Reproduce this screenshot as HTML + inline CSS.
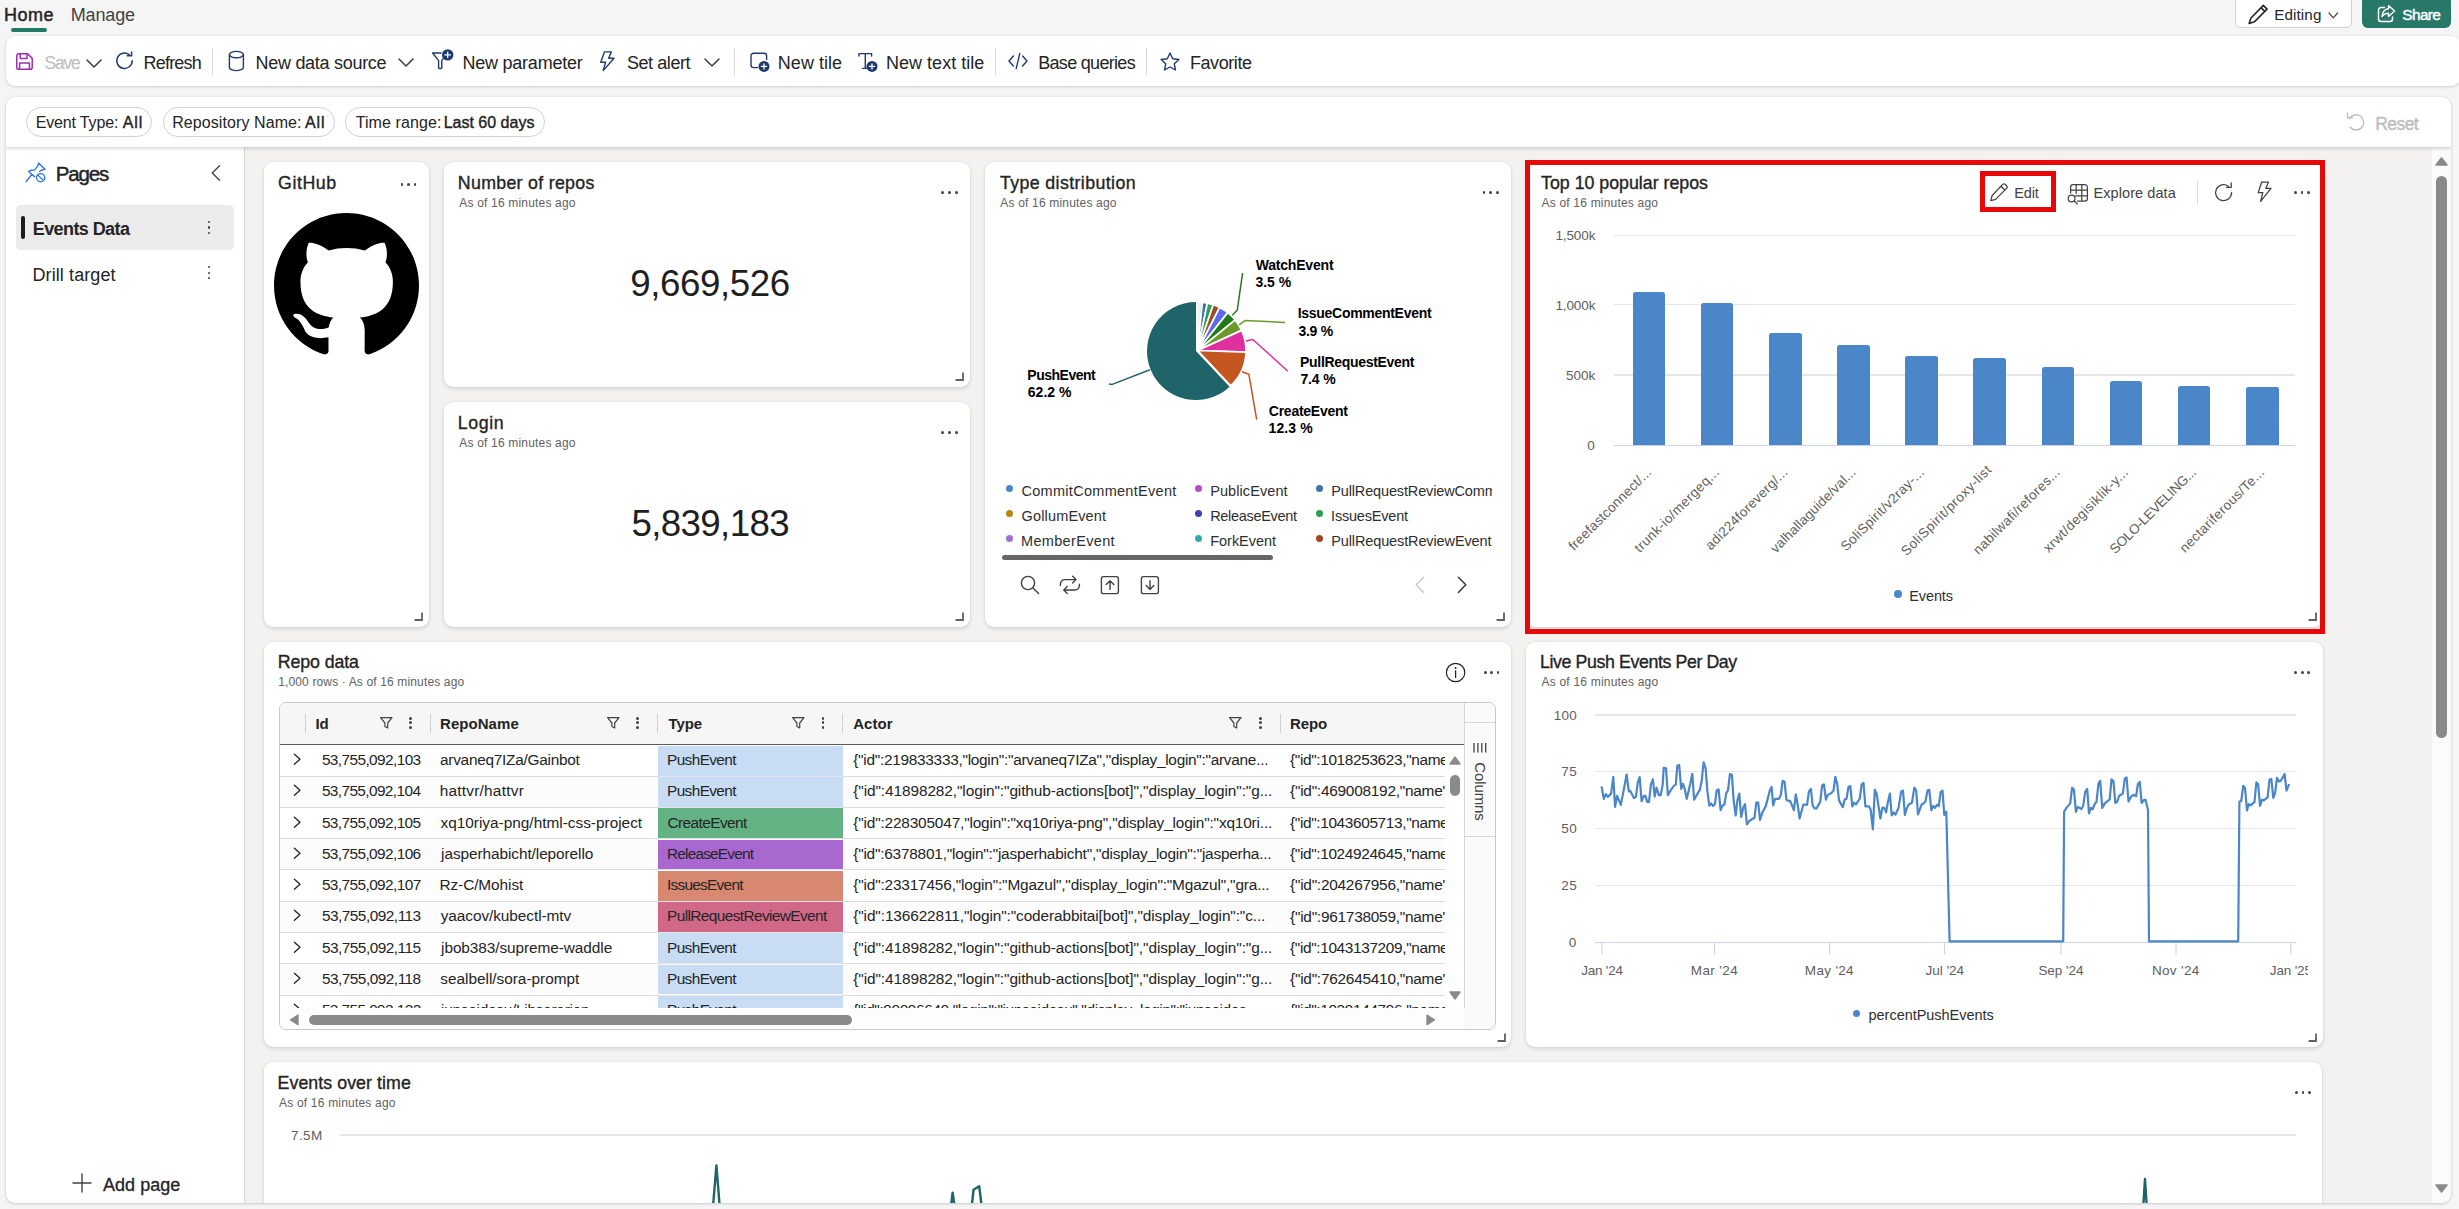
<!DOCTYPE html>
<html lang="en"><head><meta charset="utf-8"><title>Real-Time Dashboard</title>
<style>
html,body{margin:0;padding:0}
body{width:2459px;height:1209px;overflow:hidden;position:relative;background:#f5f5f5;font-family:"Liberation Sans",sans-serif;color:#242424}
span{display:block}
</style></head><body>
<span style="position:absolute;left:4.02px;top:6.00px;font-size:18px;line-height:18px;color:#242424;white-space:pre;-webkit-text-stroke:0.45px #242424;letter-spacing:0.487px;">Home</span>
<span style="position:absolute;left:70.72px;top:6.00px;font-size:18px;line-height:18px;color:#424242;white-space:pre;letter-spacing:-0.154px;">Manage</span>
<div style="position:absolute;left:11px;top:28.2px;width:36.00px;height:3.60px;background:#1f7a66;border-radius:2px;"></div>
<div style="position:absolute;left:2234.5px;top:-4px;width:117.00px;height:31.80px;background:#fff;border-radius:5px;box-sizing:border-box;border:1px solid #d1d1d1;"></div>
<svg style="position:absolute;left:2246px;top:2px;" width="24" height="24" viewBox="0 0 23 23" fill="none"><path d="M16.6 3.2 L20.2 6.8 L8 19 L3 20.6 L4.6 15.6 Z M14.6 5.6 L18 9" stroke="#242424" stroke-width="1.5" stroke-linejoin="round" stroke-linecap="round"/></svg>
<span style="position:absolute;left:2274.15px;top:7.00px;font-size:15.2px;line-height:15.2px;color:#242424;white-space:pre;letter-spacing:0.132px;">Editing</span>
<svg style="position:absolute;left:2327.4px;top:10.6px;" width="12.6" height="8.8" viewBox="0 0 12.6 8.8" fill="none"><path d="M2 2 L6.30 6.80 L10.60 2" stroke="#424242" stroke-width="1.2" stroke-linecap="round" stroke-linejoin="round"/></svg>
<div style="position:absolute;left:2362px;top:-4px;width:89.00px;height:31.80px;background:#28786a;border-radius:6px;"></div>
<svg style="position:absolute;left:2375px;top:3px;" width="22" height="22" viewBox="0 0 22 22" fill="none"><path d="M9.5 4.5 H6 a2.5 2.5 0 0 0 -2.5 2.5 v9 a2.5 2.5 0 0 0 2.5 2.5 h9 a2.5 2.5 0 0 0 2.5 -2.5 v-2" stroke="#fff" stroke-width="1.5" stroke-linecap="round"/><path d="M13.5 2.6 L19.6 8 L13.5 13.4 V10.3 C10.5 10.2 8.6 11.2 7 13.6 C7.4 9.2 9.8 6 13.5 5.7 Z" stroke="#fff" stroke-width="1.4" stroke-linejoin="round"/></svg>
<span style="position:absolute;left:2402.30px;top:7.00px;font-size:15.4px;line-height:15.4px;color:#fff;white-space:pre;-webkit-text-stroke:0.4px #fff;letter-spacing:-0.621px;">Share</span>
<div style="position:absolute;left:6px;top:36px;width:2454.00px;height:50.00px;background:#fff;border-radius:9px;box-shadow:0 1px 3px rgba(0,0,0,.14),0 0 2px rgba(0,0,0,.08);"></div>
<svg style="position:absolute;left:15px;top:52px;" width="19" height="19" viewBox="0 0 19 19" fill="none"><path d="M1.8 3.6 a1.8 1.8 0 0 1 1.8 -1.8 H12.6 L17.2 6.4 V15.4 a1.8 1.8 0 0 1 -1.8 1.8 H3.6 a1.8 1.8 0 0 1 -1.8 -1.8 Z" stroke="#9a2db0" stroke-width="1.5" stroke-linejoin="round"/><path d="M5.2 2 V6.6 H12 V2 M4.6 17 V11 H14.4 V17" stroke="#9a2db0" stroke-width="1.5" stroke-linejoin="round"/></svg>
<span style="position:absolute;left:44.18px;top:54.00px;font-size:18px;line-height:18px;color:#bdbdbd;white-space:pre;letter-spacing:-1.470px;">Save</span>
<svg style="position:absolute;left:84.5px;top:57.5px;" width="18.0" height="11.0" viewBox="0 0 18.0 11.0" fill="none"><path d="M2 2 L9.00 9.00 L16.00 2" stroke="#424242" stroke-width="1.6" stroke-linecap="round" stroke-linejoin="round"/></svg>
<svg style="position:absolute;left:114px;top:50px;" width="21" height="21" viewBox="0 0 21 21" fill="none"><path d="M18.2 10.8 A7.7 7.7 0 1 1 15.2 4.6" stroke="#1e3a6e" stroke-width="1.5" stroke-linecap="round"/><path d="M13.2 4.4 H17.6 V0.6" stroke="#1e3a6e" stroke-width="1.5" stroke-linecap="round" stroke-linejoin="round" transform="translate(0,1.4)"/></svg>
<span style="position:absolute;left:143.52px;top:54.00px;font-size:18px;line-height:18px;color:#242424;white-space:pre;letter-spacing:-0.797px;">Refresh</span>
<div style="position:absolute;left:212px;top:48px;width:1.00px;height:26.50px;background:#d6d6d6;border-radius:0px;"></div>
<svg style="position:absolute;left:227px;top:49px;" width="19" height="24" viewBox="0 0 19 24" fill="none"><ellipse cx="9.4" cy="5.6" rx="7" ry="3.2" stroke="#1e3a6e" stroke-width="1.4"/><path d="M2.4 5.6 V18.4 C2.4 20.2 5.6 21.6 9.4 21.6 C13.2 21.6 16.4 20.2 16.4 18.4 V5.6" stroke="#1e3a6e" stroke-width="1.4"/></svg>
<span style="position:absolute;left:255.52px;top:54.00px;font-size:18px;line-height:18px;color:#242424;white-space:pre;letter-spacing:-0.285px;">New data source</span>
<svg style="position:absolute;left:396.5px;top:57px;" width="18.0" height="11" viewBox="0 0 18.0 11" fill="none"><path d="M2 2 L9.00 9.00 L16.00 2" stroke="#424242" stroke-width="1.6" stroke-linecap="round" stroke-linejoin="round"/></svg>
<svg style="position:absolute;left:430px;top:47px;" width="26" height="24" viewBox="0 0 26 24" fill="none"><path d="M2.6 6 H11 M2.6 6 L8.6 13.6 V20.6 a0.9 0.9 0 0 0 0.9 0.9 h1.4 a0.9 0.9 0 0 0 0.9 -0.9 V13.6 L14 10.4" stroke="#1e3a6e" stroke-width="1.4" stroke-linejoin="round" stroke-linecap="round"/><circle cx="17.7" cy="7.9" r="5.7" fill="#1e3a6e"/><path d="M15 7.9 H20.4 M17.7 5.2 V10.6" stroke="#fff" stroke-width="1.3" stroke-linecap="round"/></svg>
<span style="position:absolute;left:462.52px;top:54.00px;font-size:18px;line-height:18px;color:#242424;white-space:pre;letter-spacing:-0.239px;">New parameter</span>
<svg style="position:absolute;left:598px;top:49px;" width="19" height="25" viewBox="0 0 19 25" fill="none"><path d="M6.4 2.9 H13.4 L10.6 9.2 H16 L5.2 21.6 L7.6 13.2 H2.8 Z" stroke="#1e3a6e" stroke-width="1.4" stroke-linejoin="round"/></svg>
<span style="position:absolute;left:626.98px;top:54.00px;font-size:18px;line-height:18px;color:#242424;white-space:pre;letter-spacing:-0.436px;">Set alert</span>
<svg style="position:absolute;left:703px;top:57px;" width="18" height="11" viewBox="0 0 18 11" fill="none"><path d="M2 2 L9.00 9.00 L16.00 2" stroke="#424242" stroke-width="1.6" stroke-linecap="round" stroke-linejoin="round"/></svg>
<div style="position:absolute;left:734px;top:48px;width:1.00px;height:26.50px;background:#d6d6d6;border-radius:0px;"></div>
<svg style="position:absolute;left:748px;top:50px;" width="24" height="24" viewBox="0 0 24 24" fill="none"><path d="M18.6 9.4 V5.8 a2.6 2.6 0 0 0 -2.6 -2.6 H5.6 a2.6 2.6 0 0 0 -2.6 2.6 V15 a2.6 2.6 0 0 0 2.6 2.6 H9.6" stroke="#1e3a6e" stroke-width="1.4" stroke-linecap="round"/><circle cx="16" cy="16.4" r="5.5" fill="#1e3a6e"/><path d="M13.4 16.4 H18.6 M16 13.8 V19" stroke="#fff" stroke-width="1.3" stroke-linecap="round"/></svg>
<span style="position:absolute;left:777.82px;top:54.00px;font-size:18px;line-height:18px;color:#242424;white-space:pre;letter-spacing:0.037px;">New tile</span>
<svg style="position:absolute;left:856px;top:50px;" width="24" height="24" viewBox="0 0 24 24" fill="none"><path d="M3 6 V3.6 H15.6 V6 M9.3 3.6 V18.4 M6.6 18.4 H10.6" stroke="#1e3a6e" stroke-width="1.4" stroke-linecap="round" stroke-linejoin="round"/><circle cx="16" cy="16.4" r="5.5" fill="#1e3a6e"/><path d="M13.4 16.4 H18.6 M16 13.8 V19" stroke="#fff" stroke-width="1.3" stroke-linecap="round"/></svg>
<span style="position:absolute;left:885.92px;top:54.00px;font-size:18px;line-height:18px;color:#242424;white-space:pre;letter-spacing:0.037px;">New text tile</span>
<div style="position:absolute;left:995px;top:48px;width:1.00px;height:26.50px;background:#d6d6d6;border-radius:0px;"></div>
<svg style="position:absolute;left:1006px;top:50px;" width="24" height="22" viewBox="0 0 24 22" fill="none"><path d="M7.4 6 L3 11 L7.4 16 M16.6 6 L21 11 L16.6 16 M13.8 3.4 L10.2 18.6" stroke="#1e3a6e" stroke-width="1.4" stroke-linecap="round" stroke-linejoin="round"/></svg>
<span style="position:absolute;left:1038.22px;top:54.00px;font-size:18px;line-height:18px;color:#242424;white-space:pre;letter-spacing:-0.694px;">Base queries</span>
<div style="position:absolute;left:1146px;top:48px;width:1.00px;height:26.50px;background:#d6d6d6;border-radius:0px;"></div>
<svg style="position:absolute;left:1158px;top:50px;" width="24" height="24" viewBox="0 0 24 24" fill="none"><path d="M12 3 L14.7 8.7 L20.9 9.5 L16.3 13.8 L17.5 20 L12 17 L6.5 20 L7.7 13.8 L3.1 9.5 L9.3 8.7 Z" stroke="#1e3a6e" stroke-width="1.4" stroke-linejoin="round"/></svg>
<span style="position:absolute;left:1189.92px;top:54.00px;font-size:18px;line-height:18px;color:#242424;white-space:pre;letter-spacing:-0.421px;">Favorite</span>
<div style="position:absolute;left:6px;top:97px;width:2445px;height:1106px;background:#f3f2f1;border-radius:9px;overflow:hidden;box-shadow:0 1px 3px rgba(0,0,0,.16),0 0 2px rgba(0,0,0,.1);">
<div style="position:absolute;left:2426px;top:50px;width:19px;height:1056px;background:#fbfbfb"></div>
<div style="position:absolute;left:2430.3px;top:79px;width:10.6px;height:562px;background:#8a8a8a;border-radius:6px"></div>
<svg style="position:absolute;left:2428px;top:58px" width="15" height="13" viewBox="0 0 15 13"><path d="M7.5 3 L13 10 H2 Z" fill="#8a8a8a" stroke="#8a8a8a" stroke-width="1.6" stroke-linejoin="round"/></svg>
<svg style="position:absolute;left:2428px;top:1085px" width="15" height="13" viewBox="0 0 15 13"><path d="M7.5 10 L13 3 H2 Z" fill="#8a8a8a" stroke="#8a8a8a" stroke-width="1.6" stroke-linejoin="round"/></svg>
<div style="position:absolute;left:0;top:50px;width:238px;height:1056px;background:#fff;border-right:1px solid #d6d6d6"></div>
<div style="position:absolute;left:0;top:0;width:2445px;height:50px;background:#fff;box-shadow:0 1px 4px rgba(0,0,0,.22)"></div>
</div>
<div style="position:absolute;left:26px;top:107.2px;width:125.80px;height:29.80px;background:#fff;border-radius:15px;box-sizing:border-box;border:1px solid #d1d1d1;"></div>
<div style="position:absolute;left:162.6px;top:107.2px;width:172.00px;height:29.80px;background:#fff;border-radius:15px;box-sizing:border-box;border:1px solid #d1d1d1;"></div>
<div style="position:absolute;left:345.4px;top:107.2px;width:199.20px;height:29.80px;background:#fff;border-radius:15px;box-sizing:border-box;border:1px solid #d1d1d1;"></div>
<span style="position:absolute;left:35.69px;top:115.00px;font-size:16px;line-height:16px;color:#242424;white-space:pre;letter-spacing:-0.152px;">Event Type:</span>
<span style="position:absolute;left:122.77px;top:115.00px;font-size:16px;line-height:16px;color:#242424;white-space:pre;-webkit-text-stroke:0.4px #242424;letter-spacing:0.860px;">All</span>
<span style="position:absolute;left:172.19px;top:115.00px;font-size:16px;line-height:16px;color:#242424;white-space:pre;letter-spacing:0.082px;">Repository Name:</span>
<span style="position:absolute;left:304.97px;top:115.00px;font-size:16px;line-height:16px;color:#242424;white-space:pre;-webkit-text-stroke:0.4px #242424;letter-spacing:0.910px;">All</span>
<span style="position:absolute;left:355.64px;top:115.00px;font-size:16px;line-height:16px;color:#242424;white-space:pre;letter-spacing:0.105px;">Time range:</span>
<span style="position:absolute;left:443.69px;top:115.00px;font-size:16px;line-height:16px;color:#242424;white-space:pre;-webkit-text-stroke:0.4px #242424;letter-spacing:-0.003px;">Last 60 days</span>
<svg style="position:absolute;left:2344px;top:111px;" width="23" height="23" viewBox="0 0 23 23" fill="none"><path d="M4 4.6 V9.4 H8.8" stroke="#bdbdbd" stroke-width="1.4" stroke-linecap="round" stroke-linejoin="round" transform="translate(-0.5,-2.6)"/><path d="M3.9 7 A7.6 7.6 0 1 1 4.6 15.6" stroke="#bdbdbd" stroke-width="1.4" stroke-linecap="round" transform="translate(1.6,0.6)"/></svg>
<span style="position:absolute;left:2375.26px;top:116.00px;font-size:17.5px;line-height:17.5px;color:#bdbdbd;white-space:pre;-webkit-text-stroke:0.4px #bdbdbd;letter-spacing:-0.563px;">Reset</span>
<svg style="position:absolute;left:24px;top:161px;" width="24" height="24" viewBox="0 0 24 24" fill="none"><path d="M15.6 10.4 L17.5 8.9 L18.8 9.1 L21.1 8.2 L14.5 2.1 L13.8 4.9 L10.5 9.2 L7.5 9.1 L4.6 10.4 L10.7 15.7 M7.8 13.4 L2.2 20.5" stroke="#2a6fdb" stroke-width="1.3" stroke-linecap="round" stroke-linejoin="round"/><circle cx="16.6" cy="16.7" r="4.1" stroke="#2a6fdb" stroke-width="1.3"/><path d="M13.9 14.1 L19.3 19.2" stroke="#2a6fdb" stroke-width="1.3"/></svg>
<span style="position:absolute;left:55.72px;top:164.00px;font-size:20.5px;line-height:20.5px;color:#242424;white-space:pre;-webkit-text-stroke:0.45px #242424;letter-spacing:-1.176px;">Pages</span>
<svg style="position:absolute;left:208px;top:163px;" width="16" height="20" viewBox="0 0 16 20" fill="none"><path d="M11.6 2.8 L4.2 10 L11.6 17.2" stroke="#424242" stroke-width="1.3" stroke-linecap="round" stroke-linejoin="round"/></svg>
<div style="position:absolute;left:15.7px;top:205px;width:218.30px;height:44.60px;background:#ebebeb;border-radius:5px;"></div>
<div style="position:absolute;left:20.7px;top:216.2px;width:4.10px;height:22.40px;background:#1b1b1b;border-radius:2px;"></div>
<span style="position:absolute;left:32.80px;top:220.00px;font-size:18px;line-height:18px;color:#242424;white-space:pre;font-weight:700;letter-spacing:-0.595px;">Events Data</span>
<span style="position:absolute;left:32.52px;top:266.00px;font-size:18px;line-height:18px;color:#242424;white-space:pre;letter-spacing:0.090px;">Drill target</span>
<div style="position:absolute;left:208.3px;top:221.04999999999998px;width:2.10px;height:2.10px;background:#424242;border-radius:2px;"></div>
<div style="position:absolute;left:208.3px;top:226.45px;width:2.10px;height:2.10px;background:#424242;border-radius:2px;"></div>
<div style="position:absolute;left:208.3px;top:231.85px;width:2.10px;height:2.10px;background:#424242;border-radius:2px;"></div>
<div style="position:absolute;left:208.3px;top:266.35px;width:2.10px;height:2.10px;background:#424242;border-radius:2px;"></div>
<div style="position:absolute;left:208.3px;top:271.75px;width:2.10px;height:2.10px;background:#424242;border-radius:2px;"></div>
<div style="position:absolute;left:208.3px;top:277.15px;width:2.10px;height:2.10px;background:#424242;border-radius:2px;"></div>
<svg style="position:absolute;left:71px;top:1172px;" width="22" height="22" viewBox="0 0 22 22" fill="none"><path d="M11 2 V20 M2 11 H20" stroke="#424242" stroke-width="1.4" stroke-linecap="round"/></svg>
<span style="position:absolute;left:102.96px;top:1176.00px;font-size:18px;line-height:18px;color:#242424;white-space:pre;-webkit-text-stroke:0.3px #242424;letter-spacing:0.038px;">Add page</span>
<div style="position:absolute;left:264px;top:162px;width:165.00px;height:464.50px;background:#fff;border-radius:9px;box-shadow:0 2px 4px rgba(0,0,0,.11),0 0 2px rgba(0,0,0,.10);"></div>
<span style="position:absolute;left:278.10px;top:175.00px;font-size:17.8px;line-height:17.8px;color:#242424;white-space:pre;-webkit-text-stroke:0.35px #242424;letter-spacing:0.520px;">GitHub</span>
<div style="position:absolute;left:400.5px;top:182.85000000000002px;width:2.90px;height:2.90px;background:#424242;border-radius:2px;"></div>
<div style="position:absolute;left:407.05px;top:182.85000000000002px;width:2.90px;height:2.90px;background:#424242;border-radius:2px;"></div>
<div style="position:absolute;left:413.6px;top:182.85000000000002px;width:2.90px;height:2.90px;background:#424242;border-radius:2px;"></div>
<svg style="position:absolute;left:274px;top:213px;" width="145" height="145" viewBox="0 0 16 16" fill="none"><path d="M8 0C3.58 0 0 3.58 0 8c0 3.54 2.29 6.53 5.47 7.59.4.07.55-.17.55-.38 0-.19-.01-.82-.01-1.49-2.01.37-2.53-.49-2.69-.94-.09-.23-.48-.94-.82-1.13-.28-.15-.68-.52-.01-.53.63-.01 1.08.58 1.23.82.72 1.21 1.87.87 2.33.66.07-.52.28-.87.51-1.07-1.78-.2-3.64-.89-3.64-3.95 0-.87.31-1.59.82-2.15-.08-.2-.36-1.02.08-2.12 0 0 .67-.21 2.2.82.64-.18 1.32-.27 2-.27.68 0 1.36.09 2 .27 1.53-1.04 2.2-.82 2.2-.82.44 1.1.16 1.92.08 2.12.51.56.82 1.27.82 2.15 0 3.07-1.87 3.75-3.65 3.95.29.25.54.73.54 1.48 0 1.07-.01 1.93-.01 2.2 0 .21.15.46.55.38A8.013 8.013 0 0016 8c0-4.42-3.58-8-8-8z" fill="#000"/></svg>
<svg style="position:absolute;left:414px;top:611.6px;" width="9" height="9" viewBox="0 0 9 9" fill="none"><path d="M8 0.6 V8 H0.6" stroke="#616161" stroke-width="1.8"/></svg>
<div style="position:absolute;left:444px;top:162px;width:526.00px;height:224.50px;background:#fff;border-radius:9px;box-shadow:0 2px 4px rgba(0,0,0,.11),0 0 2px rgba(0,0,0,.10);"></div>
<span style="position:absolute;left:457.84px;top:175.00px;font-size:17.8px;line-height:17.8px;color:#242424;white-space:pre;-webkit-text-stroke:0.35px #242424;letter-spacing:0.291px;">Number of repos</span>
<span style="position:absolute;left:459.28px;top:197.00px;font-size:12px;line-height:12px;color:#616161;white-space:pre;letter-spacing:0.184px;">As of 16 minutes ago</span>
<div style="position:absolute;left:941.3px;top:191.05px;width:2.90px;height:2.90px;background:#424242;border-radius:2px;"></div>
<div style="position:absolute;left:948.0px;top:191.05px;width:2.90px;height:2.90px;background:#424242;border-radius:2px;"></div>
<div style="position:absolute;left:954.7px;top:191.05px;width:2.90px;height:2.90px;background:#424242;border-radius:2px;"></div>
<span style="position:absolute;left:630.28px;top:266.00px;font-size:36.7px;line-height:36.7px;color:#1f1f1f;white-space:pre;letter-spacing:-0.422px;">9,669,526</span>
<svg style="position:absolute;left:955px;top:372.1px;" width="9" height="9" viewBox="0 0 9 9" fill="none"><path d="M8 0.6 V8 H0.6" stroke="#616161" stroke-width="1.8"/></svg>
<div style="position:absolute;left:444px;top:402px;width:526.00px;height:224.50px;background:#fff;border-radius:9px;box-shadow:0 2px 4px rgba(0,0,0,.11),0 0 2px rgba(0,0,0,.10);"></div>
<span style="position:absolute;left:457.84px;top:415.00px;font-size:17.8px;line-height:17.8px;color:#242424;white-space:pre;-webkit-text-stroke:0.35px #242424;letter-spacing:0.577px;">Login</span>
<span style="position:absolute;left:459.28px;top:437.00px;font-size:12px;line-height:12px;color:#616161;white-space:pre;letter-spacing:0.184px;">As of 16 minutes ago</span>
<div style="position:absolute;left:941.3px;top:431.05px;width:2.90px;height:2.90px;background:#424242;border-radius:2px;"></div>
<div style="position:absolute;left:948.0px;top:431.05px;width:2.90px;height:2.90px;background:#424242;border-radius:2px;"></div>
<div style="position:absolute;left:954.7px;top:431.05px;width:2.90px;height:2.90px;background:#424242;border-radius:2px;"></div>
<span style="position:absolute;left:631.53px;top:506.00px;font-size:36.7px;line-height:36.7px;color:#1f1f1f;white-space:pre;letter-spacing:-0.641px;">5,839,183</span>
<svg style="position:absolute;left:955px;top:611.6px;" width="9" height="9" viewBox="0 0 9 9" fill="none"><path d="M8 0.6 V8 H0.6" stroke="#616161" stroke-width="1.8"/></svg>
<div style="position:absolute;left:985px;top:162px;width:526.00px;height:464.50px;background:#fff;border-radius:9px;box-shadow:0 2px 4px rgba(0,0,0,.11),0 0 2px rgba(0,0,0,.10);"></div>
<span style="position:absolute;left:999.90px;top:175.00px;font-size:17.8px;line-height:17.8px;color:#242424;white-space:pre;-webkit-text-stroke:0.35px #242424;letter-spacing:0.386px;">Type distribution</span>
<span style="position:absolute;left:1000.28px;top:197.00px;font-size:12px;line-height:12px;color:#616161;white-space:pre;letter-spacing:0.184px;">As of 16 minutes ago</span>
<div style="position:absolute;left:1482.6px;top:190.85000000000002px;width:2.90px;height:2.90px;background:#424242;border-radius:2px;"></div>
<div style="position:absolute;left:1489.25px;top:190.85000000000002px;width:2.90px;height:2.90px;background:#424242;border-radius:2px;"></div>
<div style="position:absolute;left:1495.8999999999999px;top:190.85000000000002px;width:2.90px;height:2.90px;background:#424242;border-radius:2px;"></div>
<svg style="position:absolute;left:1496px;top:611.6px;" width="9" height="9" viewBox="0 0 9 9" fill="none"><path d="M8 0.6 V8 H0.6" stroke="#616161" stroke-width="1.8"/></svg>
<svg style="position:absolute;left:1000px;top:240px;" width="480" height="220" viewBox="0 0 480 220" fill="none"><path d="M196.00 111.10 L229.67 146.70 A49.0 49.0 0 1 1 196.00 62.10 Z" fill="#1e6468"/><path d="M197.70 110.50 L197.70 63.00 A47.50 47.50 0 0 1 198.69 63.01 Z" fill="#4a86c8" fill-opacity="0.6" stroke="#fff" stroke-width="0.7" stroke-linejoin="round"/><path d="M197.70 110.50 L198.69 63.01 A47.50 47.50 0 0 1 199.61 63.04 Z" fill="#b8860b" fill-opacity="0.6" stroke="#fff" stroke-width="0.7" stroke-linejoin="round"/><path d="M197.70 110.50 L199.61 63.04 A47.50 47.50 0 0 1 200.60 63.09 Z" fill="#a070c8" fill-opacity="0.6" stroke="#fff" stroke-width="0.7" stroke-linejoin="round"/><path d="M197.70 110.50 L200.60 63.09 A47.50 47.50 0 0 1 202.25 63.22 Z" fill="#38a8b0" fill-opacity="0.6" stroke="#fff" stroke-width="0.7" stroke-linejoin="round"/><path d="M197.70 110.50 L202.33 62.37 A48.35 48.35 0 0 1 207.34 63.12 Z" fill="#3f72a8" stroke="#fff" stroke-width="1.7" stroke-linejoin="round"/><path d="M197.70 110.50 L207.34 63.12 A48.35 48.35 0 0 1 213.28 64.73 Z" fill="#2e9e5a" stroke="#fff" stroke-width="1.7" stroke-linejoin="round"/><path d="M197.70 110.50 L213.28 64.73 A48.35 48.35 0 0 1 219.65 67.42 Z" fill="#9c4a20" stroke="#fff" stroke-width="1.7" stroke-linejoin="round"/><path d="M197.70 110.50 L219.65 67.42 A48.35 48.35 0 0 1 227.73 72.61 Z" fill="#5b6bf0" stroke="#fff" stroke-width="1.7" stroke-linejoin="round"/><path d="M197.70 110.50 L227.73 72.61 A48.35 48.35 0 0 1 235.17 79.94 Z" fill="#1f7a1a" stroke="#fff" stroke-width="1.7" stroke-linejoin="round"/><path d="M197.70 110.50 L235.17 79.94 A48.35 48.35 0 0 1 241.66 90.37 Z" fill="#6a9a2a" stroke="#fff" stroke-width="1.7" stroke-linejoin="round"/><path d="M197.70 110.50 L241.66 90.37 A48.35 48.35 0 0 1 246.02 112.19 Z" fill="#e030a0" stroke="#fff" stroke-width="1.7" stroke-linejoin="round"/><path d="M197.70 110.50 L246.02 112.19 A48.35 48.35 0 0 1 230.67 145.86 Z" fill="#c4561f" stroke="#fff" stroke-width="1.7" stroke-linejoin="round"/><path d="M232.3 75.2 L237.2 70.3 L242.6 33.2" stroke="#2a7a1a" stroke-width="1.5" fill="none" stroke-linejoin="round"/><path d="M239.1 84.9 L245.0 80.6 L285.0 82.4" stroke="#6a9a2a" stroke-width="1.5" fill="none" stroke-linejoin="round"/><path d="M246.0 101.1 L252.8 99.5 L287.9 131.2" stroke="#e030a0" stroke-width="1.5" fill="none" stroke-linejoin="round"/><path d="M242.0 131.8 L248.9 134.3 L256.7 179.6" stroke="#c4561f" stroke-width="1.5" fill="none" stroke-linejoin="round"/><path d="M149.9 129.8 L112.2 144.4 L108.9 144.0" stroke="#1e6468" stroke-width="1.5" fill="none" stroke-linejoin="round"/></svg>
<span style="position:absolute;left:1255.69px;top:258.00px;font-size:14px;line-height:14px;color:#000;white-space:pre;font-weight:700;letter-spacing:-0.191px;">WatchEvent</span>
<span style="position:absolute;left:1255.38px;top:275.00px;font-size:14px;line-height:14px;color:#000;white-space:pre;font-weight:700;letter-spacing:-0.002px;">3.5 %</span>
<span style="position:absolute;left:1297.76px;top:306.00px;font-size:14px;line-height:14px;color:#000;white-space:pre;font-weight:700;letter-spacing:-0.292px;">IssueCommentEvent</span>
<span style="position:absolute;left:1298.38px;top:324.00px;font-size:14px;line-height:14px;color:#000;white-space:pre;font-weight:700;letter-spacing:-0.252px;">3.9 %</span>
<span style="position:absolute;left:1300.06px;top:355.00px;font-size:14px;line-height:14px;color:#000;white-space:pre;font-weight:700;letter-spacing:-0.315px;">PullRequestEvent</span>
<span style="position:absolute;left:1300.40px;top:372.00px;font-size:14px;line-height:14px;color:#000;white-space:pre;font-weight:700;letter-spacing:-0.107px;">7.4 %</span>
<span style="position:absolute;left:1268.83px;top:404.00px;font-size:14px;line-height:14px;color:#000;white-space:pre;font-weight:700;letter-spacing:-0.256px;">CreateEvent</span>
<span style="position:absolute;left:1268.52px;top:421.00px;font-size:14px;line-height:14px;color:#000;white-space:pre;font-weight:700;letter-spacing:0.113px;">12.3 %</span>
<span style="position:absolute;left:1027.36px;top:368.00px;font-size:14px;line-height:14px;color:#000;white-space:pre;font-weight:700;letter-spacing:-0.493px;">PushEvent</span>
<span style="position:absolute;left:1027.79px;top:385.00px;font-size:14px;line-height:14px;color:#000;white-space:pre;font-weight:700;letter-spacing:0.039px;">62.2 %</span>
<div style="position:absolute;left:1005.5px;top:484.7px;width:7.40px;height:7.40px;background:#4a86c8;border-radius:4px;"></div>
<span style="position:absolute;left:1021.46px;top:484.00px;font-size:14.5px;line-height:14.5px;color:#2e2e2e;white-space:pre;letter-spacing:0.292px;">CommitCommentEvent</span>
<div style="position:absolute;left:1005.5px;top:509.90000000000003px;width:7.40px;height:7.40px;background:#b8860b;border-radius:4px;"></div>
<span style="position:absolute;left:1021.47px;top:509.00px;font-size:14.5px;line-height:14.5px;color:#2e2e2e;white-space:pre;letter-spacing:0.163px;">GollumEvent</span>
<div style="position:absolute;left:1005.5px;top:535.0px;width:7.40px;height:7.40px;background:#a070c8;border-radius:4px;"></div>
<span style="position:absolute;left:1021.01px;top:534.00px;font-size:14.5px;line-height:14.5px;color:#2e2e2e;white-space:pre;letter-spacing:0.334px;">MemberEvent</span>
<div style="position:absolute;left:1194.8px;top:484.7px;width:7.40px;height:7.40px;background:#b84cc8;border-radius:4px;"></div>
<span style="position:absolute;left:1210.21px;top:484.00px;font-size:14.5px;line-height:14.5px;color:#2e2e2e;white-space:pre;letter-spacing:0.082px;">PublicEvent</span>
<div style="position:absolute;left:1194.8px;top:509.90000000000003px;width:7.40px;height:7.40px;background:#4040b0;border-radius:4px;"></div>
<span style="position:absolute;left:1210.21px;top:509.00px;font-size:14.5px;line-height:14.5px;color:#2e2e2e;white-space:pre;letter-spacing:-0.307px;">ReleaseEvent</span>
<div style="position:absolute;left:1194.8px;top:535.0px;width:7.40px;height:7.40px;background:#38a8b0;border-radius:4px;"></div>
<span style="position:absolute;left:1210.21px;top:534.00px;font-size:14.5px;line-height:14.5px;color:#2e2e2e;white-space:pre;letter-spacing:-0.023px;">ForkEvent</span>
<div style="position:absolute;left:1316.0px;top:484.7px;width:7.40px;height:7.40px;background:#3f72a8;border-radius:4px;"></div>
<div style="position:absolute;left:1328.4px;top:479.7px;width:163.2px;height:24px;overflow:hidden">
<span style="position:absolute;left:2.81px;top:4.00px;font-size:14.5px;line-height:14.5px;color:#2e2e2e;white-space:pre;letter-spacing:-0.141px;">PullRequestReviewCommentEvent</span>
</div>
<div style="position:absolute;left:1316.0px;top:509.90000000000003px;width:7.40px;height:7.40px;background:#2e9e50;border-radius:4px;"></div>
<span style="position:absolute;left:1331.06px;top:509.00px;font-size:14.5px;line-height:14.5px;color:#2e2e2e;white-space:pre;letter-spacing:-0.194px;">IssuesEvent</span>
<div style="position:absolute;left:1316.0px;top:535.0px;width:7.40px;height:7.40px;background:#a0481e;border-radius:4px;"></div>
<span style="position:absolute;left:1331.21px;top:534.00px;font-size:14.5px;line-height:14.5px;color:#2e2e2e;white-space:pre;letter-spacing:-0.120px;">PullRequestReviewEvent</span>
<div style="position:absolute;left:1002.3px;top:554.6px;width:270.40px;height:5.60px;background:#666;border-radius:3px;"></div>
<svg style="position:absolute;left:1018px;top:573px;" width="24" height="24" viewBox="0 0 24 24" fill="none"><circle cx="10" cy="10" r="6.6" stroke="#424242" stroke-width="1.4"/><path d="M15 15 L20.6 20.6" stroke="#424242" stroke-width="1.4" stroke-linecap="round"/></svg>
<svg style="position:absolute;left:1057px;top:573px;" width="26" height="24" viewBox="0 0 26 24" fill="none"><path d="M3.4 12.4 V11 a4.4 4.4 0 0 1 4.4 -4.4 H18.6 M15.6 3.2 L19 6.6 L15.6 10 M22.4 11.2 V12.6 a4.4 4.4 0 0 1 -4.4 4.4 H7.2 M10.2 13.6 L6.8 17 L10.2 20.4" stroke="#424242" stroke-width="1.4" stroke-linecap="round" stroke-linejoin="round"/></svg>
<svg style="position:absolute;left:1098px;top:573px;" width="24" height="24" viewBox="0 0 24 24" fill="none"><rect x="3.4" y="3.6" width="17" height="17" rx="2.2" stroke="#424242" stroke-width="1.4"/><path d="M12 16.6 V8 M8.2 11.6 L12 7.8 L15.8 11.6" stroke="#424242" stroke-width="1.4" stroke-linecap="round" stroke-linejoin="round"/></svg>
<svg style="position:absolute;left:1138px;top:573px;" width="24" height="24" viewBox="0 0 24 24" fill="none"><rect x="3.4" y="3.6" width="17" height="17" rx="2.2" stroke="#424242" stroke-width="1.4"/><path d="M12 7.6 V16.2 M8.2 12.6 L12 16.4 L15.8 12.6" stroke="#424242" stroke-width="1.4" stroke-linecap="round" stroke-linejoin="round"/></svg>
<svg style="position:absolute;left:1412px;top:574px;" width="16" height="22" viewBox="0 0 16 22" fill="none"><path d="M11.6 3.2 L4.2 10.8 L11.6 18.4" stroke="#c8c8c8" stroke-width="1.4" stroke-linecap="round" stroke-linejoin="round"/></svg>
<svg style="position:absolute;left:1454px;top:574px;" width="16" height="22" viewBox="0 0 16 22" fill="none"><path d="M4.4 3.2 L11.8 10.8 L4.4 18.4" stroke="#333" stroke-width="1.4" stroke-linecap="round" stroke-linejoin="round"/></svg>
<div style="position:absolute;left:1526px;top:162px;width:796.50px;height:464.50px;background:#fff;border-radius:9px;box-shadow:0 2px 4px rgba(0,0,0,.11),0 0 2px rgba(0,0,0,.10);"></div>
<div style="position:absolute;left:1525px;top:160px;width:800.00px;height:474.00px;background:transparent;border-radius:0px;box-sizing:border-box;border:5px solid #e80808;"></div>
<span style="position:absolute;left:1541.10px;top:175.00px;font-size:17.8px;line-height:17.8px;color:#242424;white-space:pre;-webkit-text-stroke:0.35px #242424;letter-spacing:-0.012px;">Top 10 popular repos</span>
<span style="position:absolute;left:1541.48px;top:197.00px;font-size:12px;line-height:12px;color:#616161;white-space:pre;letter-spacing:0.200px;">As of 16 minutes ago</span>
<div style="position:absolute;left:1980px;top:171px;width:76.00px;height:40.80px;background:transparent;border-radius:0px;box-sizing:border-box;border:5px solid #e80808;"></div>
<svg style="position:absolute;left:1988px;top:181px;" width="22" height="22" viewBox="0 0 22 22" fill="none"><path d="M14.6 3.4 a1.9 1.9 0 0 1 2.7 0 l1.3 1.3 a1.9 1.9 0 0 1 0 2.7 L7.6 18.4 L2.8 19.6 L4 14.8 Z M13 5.2 L16.8 9" stroke="#424242" stroke-width="1.3" stroke-linejoin="round" stroke-linecap="round"/></svg>
<span style="position:absolute;left:2014.21px;top:186.00px;font-size:14.5px;line-height:14.5px;color:#424242;white-space:pre;letter-spacing:-0.097px;">Edit</span>
<svg style="position:absolute;left:2065px;top:181px;" width="26" height="26" viewBox="0 0 26 26" fill="none"><path d="M9 3.6 H19.8 a2.6 2.6 0 0 1 2.6 2.6 V17.6 a2.6 2.6 0 0 1 -2.6 2.6 H12.4 M5.6 12 V6.2 a2.6 2.6 0 0 1 2.6 -2.6 H9 M5.6 9.2 H22.4 M10.4 14.8 H22.4 M11.2 3.6 V12.4 M16.8 3.6 V20.2" stroke="#424242" stroke-width="1.25" stroke-linecap="round"/><circle cx="6.6" cy="17.4" r="3.4" stroke="#424242" stroke-width="1.25"/><path d="M9.1 19.9 L12.2 23" stroke="#424242" stroke-width="1.25" stroke-linecap="round"/></svg>
<span style="position:absolute;left:2093.51px;top:186.00px;font-size:14.5px;line-height:14.5px;color:#424242;white-space:pre;letter-spacing:0.071px;">Explore data</span>
<div style="position:absolute;left:2197.3px;top:180.5px;width:1.00px;height:24.20px;background:#dcdcdc;border-radius:0px;"></div>
<svg style="position:absolute;left:2212px;top:181px;" width="24" height="24" viewBox="0 0 24 24" fill="none"><path d="M19.6 11.6 A8 8 0 1 1 16.4 5.2" stroke="#424242" stroke-width="1.3" stroke-linecap="round"/><path d="M14.6 5.6 H19.2 V1.2" stroke="#424242" stroke-width="1.3" stroke-linecap="round" stroke-linejoin="round" transform="translate(0,0.8)"/></svg>
<svg style="position:absolute;left:2255px;top:179px;" width="20" height="26" viewBox="0 0 20 26" fill="none"><path d="M6.6 3.2 H13.4 L10.8 9.4 H16 L5.6 22.4 L7.8 13.6 H3.2 Z" stroke="#424242" stroke-width="1.3" stroke-linejoin="round"/></svg>
<div style="position:absolute;left:2294.2px;top:190.85000000000002px;width:2.90px;height:2.90px;background:#424242;border-radius:2px;"></div>
<div style="position:absolute;left:2300.55px;top:190.85000000000002px;width:2.90px;height:2.90px;background:#424242;border-radius:2px;"></div>
<div style="position:absolute;left:2306.9px;top:190.85000000000002px;width:2.90px;height:2.90px;background:#424242;border-radius:2px;"></div>
<svg style="position:absolute;left:2308px;top:612.1px;" width="9" height="9" viewBox="0 0 9 9" fill="none"><path d="M8 0.6 V8 H0.6" stroke="#616161" stroke-width="1.8"/></svg>
<div style="position:absolute;left:1614px;top:234.5px;width:681.40px;height:1.20px;background:#e6e6e6;border-radius:0px;"></div>
<span style="position:absolute;left:1555.47px;top:229.00px;font-size:13.5px;line-height:13.5px;color:#605e5c;white-space:pre;letter-spacing:-0.125px;">1,500k</span>
<div style="position:absolute;left:1614px;top:304.29999999999995px;width:681.40px;height:1.20px;background:#e6e6e6;border-radius:0px;"></div>
<span style="position:absolute;left:1555.47px;top:299.00px;font-size:13.5px;line-height:13.5px;color:#605e5c;white-space:pre;letter-spacing:-0.125px;">1,000k</span>
<div style="position:absolute;left:1614px;top:374.4px;width:681.40px;height:1.20px;background:#e6e6e6;border-radius:0px;"></div>
<span style="position:absolute;left:1566.06px;top:369.00px;font-size:13.5px;line-height:13.5px;color:#605e5c;white-space:pre;letter-spacing:0.016px;">500k</span>
<div style="position:absolute;left:1614px;top:444.5px;width:681.40px;height:1.20px;background:#ccd6eb;border-radius:0px;"></div>
<span style="position:absolute;left:1587.17px;top:439.00px;font-size:13.5px;line-height:13.5px;color:#605e5c;white-space:pre;">0</span>
<div style="position:absolute;left:1632.67px;top:291.9px;width:32.60px;height:152.70px;background:#4a86c8;border-radius:0px;border-radius:2.5px 2.5px 0 0;"></div>
<div style="position:absolute;left:1700.8100000000002px;top:303.2px;width:32.60px;height:141.40px;background:#4a86c8;border-radius:0px;border-radius:2.5px 2.5px 0 0;"></div>
<div style="position:absolute;left:1768.95px;top:333.2px;width:32.60px;height:111.40px;background:#4a86c8;border-radius:0px;border-radius:2.5px 2.5px 0 0;"></div>
<div style="position:absolute;left:1837.0900000000001px;top:344.6px;width:32.60px;height:100.00px;background:#4a86c8;border-radius:0px;border-radius:2.5px 2.5px 0 0;"></div>
<div style="position:absolute;left:1905.2300000000002px;top:355.9px;width:32.60px;height:88.70px;background:#4a86c8;border-radius:0px;border-radius:2.5px 2.5px 0 0;"></div>
<div style="position:absolute;left:1973.3700000000001px;top:358.3px;width:32.60px;height:86.30px;background:#4a86c8;border-radius:0px;border-radius:2.5px 2.5px 0 0;"></div>
<div style="position:absolute;left:2041.51px;top:367.3px;width:32.60px;height:77.30px;background:#4a86c8;border-radius:0px;border-radius:2.5px 2.5px 0 0;"></div>
<div style="position:absolute;left:2109.65px;top:381px;width:32.60px;height:63.60px;background:#4a86c8;border-radius:0px;border-radius:2.5px 2.5px 0 0;"></div>
<div style="position:absolute;left:2177.79px;top:385.9px;width:32.60px;height:58.70px;background:#4a86c8;border-radius:0px;border-radius:2.5px 2.5px 0 0;"></div>
<div style="position:absolute;left:2245.93px;top:387.1px;width:32.60px;height:57.50px;background:#4a86c8;border-radius:0px;border-radius:2.5px 2.5px 0 0;"></div>
<span style="position:absolute;left:1541.88px;top:463.00px;font-size:13.5px;line-height:13.5px;color:#605e5c;white-space:pre;letter-spacing:0.173px;transform:rotate(-45deg);transform-origin:109.19px 11.00px;">freefastconnect/...</span>
<span style="position:absolute;left:1607.21px;top:463.00px;font-size:13.5px;line-height:13.5px;color:#605e5c;white-space:pre;letter-spacing:0.438px;transform:rotate(-45deg);transform-origin:112.00px 11.00px;">trunk-io/mergeq...</span>
<span style="position:absolute;left:1678.88px;top:463.00px;font-size:13.5px;line-height:13.5px;color:#605e5c;white-space:pre;letter-spacing:0.273px;transform:rotate(-45deg);transform-origin:108.47px 11.00px;">adi224foreverg/...</span>
<span style="position:absolute;left:1742.84px;top:463.00px;font-size:13.5px;line-height:13.5px;color:#605e5c;white-space:pre;letter-spacing:0.148px;transform:rotate(-45deg);transform-origin:112.65px 11.00px;">valhallaguide/val...</span>
<span style="position:absolute;left:1813.62px;top:463.00px;font-size:13.5px;line-height:13.5px;color:#605e5c;white-space:pre;letter-spacing:0.288px;transform:rotate(-45deg);transform-origin:110.01px 11.00px;">SoliSpirit/v2ray-...</span>
<span style="position:absolute;left:1870.76px;top:460.00px;font-size:13.5px;line-height:13.5px;color:#605e5c;white-space:pre;letter-spacing:0.504px;transform:rotate(-45deg);transform-origin:121.01px 11.00px;">SoliSpirit/proxy-list</span>
<span style="position:absolute;left:1945.11px;top:463.00px;font-size:13.5px;line-height:13.5px;color:#605e5c;white-space:pre;letter-spacing:0.341px;transform:rotate(-45deg);transform-origin:114.80px 11.00px;">nabilwafi/refores...</span>
<span style="position:absolute;left:2016.00px;top:463.00px;font-size:13.5px;line-height:13.5px;color:#605e5c;white-space:pre;letter-spacing:0.448px;transform:rotate(-45deg);transform-origin:112.05px 11.00px;">xrwt/degisiklik-y...</span>
<span style="position:absolute;left:2082.28px;top:463.00px;font-size:13.5px;line-height:13.5px;color:#605e5c;white-space:pre;letter-spacing:-0.276px;transform:rotate(-45deg);transform-origin:113.91px 11.00px;">SOLO-LEVELING...</span>
<span style="position:absolute;left:2152.03px;top:463.00px;font-size:13.5px;line-height:13.5px;color:#605e5c;white-space:pre;letter-spacing:0.346px;transform:rotate(-45deg);transform-origin:112.30px 11.00px;">nectariferous/Te...</span>
<div style="position:absolute;left:1894.0px;top:590.1px;width:7.60px;height:7.60px;background:#4a86c8;border-radius:4px;"></div>
<span style="position:absolute;left:1909.21px;top:589.00px;font-size:14.5px;line-height:14.5px;color:#2e2e2e;white-space:pre;letter-spacing:-0.103px;">Events</span>
<div style="position:absolute;left:264px;top:642px;width:1247.00px;height:404.50px;background:#fff;border-radius:9px;box-shadow:0 2px 4px rgba(0,0,0,.11),0 0 2px rgba(0,0,0,.10);"></div>
<span style="position:absolute;left:277.64px;top:654.00px;font-size:17.8px;line-height:17.8px;color:#242424;white-space:pre;-webkit-text-stroke:0.35px #242424;letter-spacing:-0.087px;">Repo data</span>
<span style="position:absolute;left:278.19px;top:676.00px;font-size:12px;line-height:12px;color:#616161;white-space:pre;letter-spacing:0.141px;">1,000 rows · As of 16 minutes ago</span>
<svg style="position:absolute;left:1444px;top:661px;" width="23" height="23" viewBox="0 0 23 23" fill="none"><circle cx="11.6" cy="11.5" r="9.2" stroke="#242424" stroke-width="1.2"/><path d="M11.6 10 V16.4" stroke="#242424" stroke-width="1.3" stroke-linecap="round"/><circle cx="11.6" cy="7" r="0.95" fill="#242424"/></svg>
<div style="position:absolute;left:1483.9px;top:671.25px;width:2.90px;height:2.90px;background:#424242;border-radius:2px;"></div>
<div style="position:absolute;left:1490.2px;top:671.25px;width:2.90px;height:2.90px;background:#424242;border-radius:2px;"></div>
<div style="position:absolute;left:1496.5px;top:671.25px;width:2.90px;height:2.90px;background:#424242;border-radius:2px;"></div>
<svg style="position:absolute;left:1496.5px;top:1032.6px;" width="9" height="9" viewBox="0 0 9 9" fill="none"><path d="M8 0.6 V8 H0.6" stroke="#616161" stroke-width="1.8"/></svg>
<div style="position:absolute;left:279px;top:702px;width:1217px;height:328.4px;box-sizing:border-box;border:1px solid #c8c8c8;border-radius:7px;background:#fff;overflow:hidden">
<div style="position:absolute;left:-1.0px;top:-1.0px;width:1185.0px;height:41.8px;background:#f6f6f6;"></div>
<div style="position:absolute;left:-1.0px;top:40.8px;width:1185.0px;height:1.1px;background:#5c5c5c;"></div>
<div style="position:absolute;left:1184.0px;top:-1.0px;width:1.0px;height:328.4px;background:#d6d6d6;"></div>
<div style="position:absolute;left:1185.0px;top:-1.0px;width:31.0px;height:328.4px;background:#fafafa;"></div>
<div style="position:absolute;left:1185.0px;top:19.0px;width:31.0px;height:1.0px;background:#d6d6d6;"></div>
<div style="position:absolute;left:1185.0px;top:133.0px;width:31.0px;height:1.0px;background:#d6d6d6;"></div>
<div style="position:absolute;left:24.7px;top:10.7px;width:1.0px;height:19.1px;background:#d0d0d0;"></div>
<div style="position:absolute;left:150.1px;top:10.7px;width:1.0px;height:19.1px;background:#d0d0d0;"></div>
<div style="position:absolute;left:377.0px;top:10.7px;width:1.0px;height:19.1px;background:#d0d0d0;"></div>
<div style="position:absolute;left:562.2px;top:10.7px;width:1.0px;height:19.1px;background:#d0d0d0;"></div>
<div style="position:absolute;left:1000.1px;top:10.7px;width:1.0px;height:19.1px;background:#d0d0d0;"></div>
<div style="position:absolute;left:378.2px;top:42.7px;width:184.5px;height:29.9px;background:#c8ddf4;"></div>
<div style="position:absolute;left:-1.0px;top:73.2px;width:1166.0px;height:31.3px;background:#fcfcfc;"></div>
<div style="position:absolute;left:378.2px;top:74.0px;width:184.5px;height:29.9px;background:#c8ddf4;"></div>
<div style="position:absolute;left:378.2px;top:105.2px;width:184.5px;height:29.9px;background:#62b283;"></div>
<div style="position:absolute;left:-1.0px;top:135.7px;width:1166.0px;height:31.3px;background:#fcfcfc;"></div>
<div style="position:absolute;left:378.2px;top:136.5px;width:184.5px;height:29.9px;background:#a868d0;"></div>
<div style="position:absolute;left:378.2px;top:167.8px;width:184.5px;height:29.9px;background:#d88770;"></div>
<div style="position:absolute;left:-1.0px;top:198.2px;width:1166.0px;height:31.3px;background:#fcfcfc;"></div>
<div style="position:absolute;left:378.2px;top:199.0px;width:184.5px;height:29.9px;background:#d26888;"></div>
<div style="position:absolute;left:378.2px;top:230.3px;width:184.5px;height:29.9px;background:#c8ddf4;"></div>
<div style="position:absolute;left:-1.0px;top:260.8px;width:1166.0px;height:31.3px;background:#fcfcfc;"></div>
<div style="position:absolute;left:378.2px;top:261.6px;width:184.5px;height:29.9px;background:#c8ddf4;"></div>
<div style="position:absolute;left:378.2px;top:292.9px;width:184.5px;height:29.9px;background:#c8ddf4;"></div>
<div style="position:absolute;left:-1.0px;top:72.6px;width:379.2px;height:1.0px;background:#dcdcdc;"></div>
<div style="position:absolute;left:378.2px;top:72.6px;width:184.5px;height:1.0px;background:#e4e4e6;"></div>
<div style="position:absolute;left:562.7px;top:72.6px;width:602.3px;height:1.0px;background:#dcdcdc;"></div>
<div style="position:absolute;left:-1.0px;top:103.8px;width:379.2px;height:1.0px;background:#dcdcdc;"></div>
<div style="position:absolute;left:378.2px;top:103.8px;width:184.5px;height:1.0px;background:#e4e4e6;"></div>
<div style="position:absolute;left:562.7px;top:103.8px;width:602.3px;height:1.0px;background:#dcdcdc;"></div>
<div style="position:absolute;left:-1.0px;top:135.1px;width:379.2px;height:1.0px;background:#dcdcdc;"></div>
<div style="position:absolute;left:378.2px;top:135.1px;width:184.5px;height:1.0px;background:#e4e4e6;"></div>
<div style="position:absolute;left:562.7px;top:135.1px;width:602.3px;height:1.0px;background:#dcdcdc;"></div>
<div style="position:absolute;left:-1.0px;top:166.4px;width:379.2px;height:1.0px;background:#dcdcdc;"></div>
<div style="position:absolute;left:378.2px;top:166.4px;width:184.5px;height:1.0px;background:#e4e4e6;"></div>
<div style="position:absolute;left:562.7px;top:166.4px;width:602.3px;height:1.0px;background:#dcdcdc;"></div>
<div style="position:absolute;left:-1.0px;top:197.6px;width:379.2px;height:1.0px;background:#dcdcdc;"></div>
<div style="position:absolute;left:378.2px;top:197.6px;width:184.5px;height:1.0px;background:#e4e4e6;"></div>
<div style="position:absolute;left:562.7px;top:197.6px;width:602.3px;height:1.0px;background:#dcdcdc;"></div>
<div style="position:absolute;left:-1.0px;top:228.9px;width:379.2px;height:1.0px;background:#dcdcdc;"></div>
<div style="position:absolute;left:378.2px;top:228.9px;width:184.5px;height:1.0px;background:#e4e4e6;"></div>
<div style="position:absolute;left:562.7px;top:228.9px;width:602.3px;height:1.0px;background:#dcdcdc;"></div>
<div style="position:absolute;left:-1.0px;top:260.2px;width:379.2px;height:1.0px;background:#dcdcdc;"></div>
<div style="position:absolute;left:378.2px;top:260.2px;width:184.5px;height:1.0px;background:#e4e4e6;"></div>
<div style="position:absolute;left:562.7px;top:260.2px;width:602.3px;height:1.0px;background:#dcdcdc;"></div>
<div style="position:absolute;left:-1.0px;top:291.5px;width:379.2px;height:1.0px;background:#dcdcdc;"></div>
<div style="position:absolute;left:378.2px;top:291.5px;width:184.5px;height:1.0px;background:#e4e4e6;"></div>
<div style="position:absolute;left:562.7px;top:291.5px;width:602.3px;height:1.0px;background:#dcdcdc;"></div>
<div style="position:absolute;left:-1.0px;top:322.7px;width:379.2px;height:1.0px;background:#dcdcdc;"></div>
<div style="position:absolute;left:378.2px;top:322.7px;width:184.5px;height:1.0px;background:#e4e4e6;"></div>
<div style="position:absolute;left:562.7px;top:322.7px;width:602.3px;height:1.0px;background:#dcdcdc;"></div>
<div style="position:absolute;left:-1.0px;top:305.4px;width:1186.0px;height:22.0px;background:#fdfdfd;"></div>
<div style="position:absolute;left:29.3px;top:311.7px;width:542.4px;height:10.0px;background:#8a8a8a;border-radius:6px;"></div>
<div style="position:absolute;left:1169.8px;top:71.8px;width:9.8px;height:20.9px;background:#8a8a8a;border-radius:6px;"></div>
</div>
<svg style="position:absolute;left:288px;top:1013px;" width="12" height="14" viewBox="0 0 12 14" fill="none"><path d="M10 2.2 V11.6 L2.6 6.9 Z" fill="#8a8a8a" stroke="#8a8a8a" stroke-width="1.4" stroke-linejoin="round"/></svg>
<svg style="position:absolute;left:1425px;top:1013px;" width="12" height="14" viewBox="0 0 12 14" fill="none"><path d="M2 2.2 V11.6 L9.4 6.9 Z" fill="#8a8a8a" stroke="#8a8a8a" stroke-width="1.4" stroke-linejoin="round"/></svg>
<svg style="position:absolute;left:1447.8px;top:755px;" width="14" height="11" viewBox="0 0 14 11" fill="none"><path d="M7 2 L12 9 H2 Z" fill="#8a8a8a" stroke="#8a8a8a" stroke-width="1.4" stroke-linejoin="round"/></svg>
<svg style="position:absolute;left:1447.8px;top:989.6px;" width="14" height="11" viewBox="0 0 14 11" fill="none"><path d="M7 9 L12 2 H2 Z" fill="#8a8a8a" stroke="#8a8a8a" stroke-width="1.4" stroke-linejoin="round"/></svg>
<span style="position:absolute;left:315.40px;top:716.00px;font-size:15px;line-height:15px;color:#242424;white-space:pre;font-weight:700;">Id</span>
<span style="position:absolute;left:440.00px;top:716.00px;font-size:15px;line-height:15px;color:#242424;white-space:pre;font-weight:700;letter-spacing:0.052px;">RepoName</span>
<span style="position:absolute;left:668.43px;top:716.00px;font-size:15px;line-height:15px;color:#242424;white-space:pre;font-weight:700;letter-spacing:-0.072px;">Type</span>
<span style="position:absolute;left:853.13px;top:716.00px;font-size:15px;line-height:15px;color:#242424;white-space:pre;font-weight:700;letter-spacing:0.058px;">Actor</span>
<span style="position:absolute;left:1290.00px;top:716.00px;font-size:15px;line-height:15px;color:#242424;white-space:pre;font-weight:700;letter-spacing:-0.137px;">Repo</span>
<svg style="position:absolute;left:378.9px;top:715.6px;" width="15" height="14" viewBox="0 0 15 14" fill="none"><path d="M1.6 1.7 H13 L8.7 7 V12 L5.9 10.4 V7 Z" stroke="#424242" stroke-width="1.2" stroke-linejoin="round"/></svg>
<div style="position:absolute;left:409.15px;top:716.8499999999999px;width:2.70px;height:2.70px;background:#424242;border-radius:2px;"></div>
<div style="position:absolute;left:409.15px;top:721.4499999999999px;width:2.70px;height:2.70px;background:#424242;border-radius:2px;"></div>
<div style="position:absolute;left:409.15px;top:726.05px;width:2.70px;height:2.70px;background:#424242;border-radius:2px;"></div>
<svg style="position:absolute;left:605.8px;top:715.6px;" width="15" height="14" viewBox="0 0 15 14" fill="none"><path d="M1.6 1.7 H13 L8.7 7 V12 L5.9 10.4 V7 Z" stroke="#424242" stroke-width="1.2" stroke-linejoin="round"/></svg>
<div style="position:absolute;left:636.35px;top:716.8499999999999px;width:2.70px;height:2.70px;background:#424242;border-radius:2px;"></div>
<div style="position:absolute;left:636.35px;top:721.4499999999999px;width:2.70px;height:2.70px;background:#424242;border-radius:2px;"></div>
<div style="position:absolute;left:636.35px;top:726.05px;width:2.70px;height:2.70px;background:#424242;border-radius:2px;"></div>
<svg style="position:absolute;left:790.6px;top:715.6px;" width="15" height="14" viewBox="0 0 15 14" fill="none"><path d="M1.6 1.7 H13 L8.7 7 V12 L5.9 10.4 V7 Z" stroke="#424242" stroke-width="1.2" stroke-linejoin="round"/></svg>
<div style="position:absolute;left:821.55px;top:716.8499999999999px;width:2.70px;height:2.70px;background:#424242;border-radius:2px;"></div>
<div style="position:absolute;left:821.55px;top:721.4499999999999px;width:2.70px;height:2.70px;background:#424242;border-radius:2px;"></div>
<div style="position:absolute;left:821.55px;top:726.05px;width:2.70px;height:2.70px;background:#424242;border-radius:2px;"></div>
<svg style="position:absolute;left:1228.2px;top:715.6px;" width="15" height="14" viewBox="0 0 15 14" fill="none"><path d="M1.6 1.7 H13 L8.7 7 V12 L5.9 10.4 V7 Z" stroke="#424242" stroke-width="1.2" stroke-linejoin="round"/></svg>
<div style="position:absolute;left:1259.45px;top:716.8499999999999px;width:2.70px;height:2.70px;background:#424242;border-radius:2px;"></div>
<div style="position:absolute;left:1259.45px;top:721.4499999999999px;width:2.70px;height:2.70px;background:#424242;border-radius:2px;"></div>
<div style="position:absolute;left:1259.45px;top:726.05px;width:2.70px;height:2.70px;background:#424242;border-radius:2px;"></div>
<svg style="position:absolute;left:1472px;top:741px;" width="16" height="14" viewBox="0 0 16 14" fill="none"><path d="M2 2 V11.6 M5.9 2 V11.6 M9.8 2 V11.6 M13.7 2 V11.6" stroke="#424242" stroke-width="1.3"/></svg>
<span style="position:absolute;left:1473.64px;top:750.00px;font-size:15px;line-height:15px;color:#424242;white-space:pre;letter-spacing:-0.097px;transform:rotate(90deg);transform-origin:0.76px 13.00px;">Columns</span>
<svg style="position:absolute;left:292px;top:752.1px;" width="11" height="15" viewBox="0 0 11 15" fill="none"><path d="M2.4 2.2 L8 7.2 L2.4 12.2" stroke="#242424" stroke-width="1.3" stroke-linecap="round" stroke-linejoin="round"/></svg>
<span style="position:absolute;left:321.88px;top:752.00px;font-size:15.4px;line-height:15.4px;color:#242424;white-space:pre;letter-spacing:-0.592px;">53,755,092,103</span>
<span style="position:absolute;left:440.05px;top:752.00px;font-size:15.4px;line-height:15.4px;color:#242424;white-space:pre;letter-spacing:-0.268px;">arvaneq7IZa/Gainbot</span>
<span style="position:absolute;left:667.04px;top:752.00px;font-size:15.4px;line-height:15.4px;color:#242424;white-space:pre;letter-spacing:-0.620px;">PushEvent</span>
<span style="position:absolute;left:853.24px;top:752.00px;font-size:15.4px;line-height:15.4px;color:#242424;white-space:pre;letter-spacing:-0.275px;">{"id":219833333,"login":"arvaneq7IZa","display_login":"arvane...</span>
<div style="position:absolute;left:1288px;top:749.1px;width:157px;height:24px;overflow:hidden">
<span style="position:absolute;left:2.04px;top:3.00px;font-size:15.4px;line-height:15.4px;color:#242424;white-space:pre;letter-spacing:-0.358px;">{"id":1018253623,"name</span>
</div>
<svg style="position:absolute;left:292px;top:783.37px;" width="11" height="15" viewBox="0 0 11 15" fill="none"><path d="M2.4 2.2 L8 7.2 L2.4 12.2" stroke="#242424" stroke-width="1.3" stroke-linecap="round" stroke-linejoin="round"/></svg>
<span style="position:absolute;left:321.88px;top:783.00px;font-size:15.4px;line-height:15.4px;color:#242424;white-space:pre;letter-spacing:-0.609px;">53,755,092,104</span>
<span style="position:absolute;left:439.63px;top:783.00px;font-size:15.4px;line-height:15.4px;color:#242424;white-space:pre;letter-spacing:0.239px;">hattvr/hattvr</span>
<span style="position:absolute;left:667.04px;top:783.00px;font-size:15.4px;line-height:15.4px;color:#242424;white-space:pre;letter-spacing:-0.620px;">PushEvent</span>
<span style="position:absolute;left:853.24px;top:783.00px;font-size:15.4px;line-height:15.4px;color:#242424;white-space:pre;letter-spacing:-0.088px;">{"id":41898282,"login":"github-actions[bot]","display_login":"g...</span>
<div style="position:absolute;left:1288px;top:780.4px;width:157px;height:24px;overflow:hidden">
<span style="position:absolute;left:2.04px;top:3.00px;font-size:15.4px;line-height:15.4px;color:#242424;white-space:pre;letter-spacing:-0.245px;">{"id":469008192,"name"</span>
</div>
<svg style="position:absolute;left:292px;top:814.64px;" width="11" height="15" viewBox="0 0 11 15" fill="none"><path d="M2.4 2.2 L8 7.2 L2.4 12.2" stroke="#242424" stroke-width="1.3" stroke-linecap="round" stroke-linejoin="round"/></svg>
<span style="position:absolute;left:321.88px;top:815.00px;font-size:15.4px;line-height:15.4px;color:#242424;white-space:pre;letter-spacing:-0.594px;">53,755,092,105</span>
<span style="position:absolute;left:440.53px;top:815.00px;font-size:15.4px;line-height:15.4px;color:#242424;white-space:pre;letter-spacing:-0.010px;">xq10riya-png/html-css-project</span>
<span style="position:absolute;left:667.52px;top:815.00px;font-size:15.4px;line-height:15.4px;color:#242424;white-space:pre;letter-spacing:-0.576px;">CreateEvent</span>
<span style="position:absolute;left:853.24px;top:815.00px;font-size:15.4px;line-height:15.4px;color:#242424;white-space:pre;letter-spacing:-0.170px;">{"id":228305047,"login":"xq10riya-png","display_login":"xq10ri...</span>
<div style="position:absolute;left:1288px;top:811.6px;width:157px;height:24px;overflow:hidden">
<span style="position:absolute;left:2.04px;top:3.00px;font-size:15.4px;line-height:15.4px;color:#242424;white-space:pre;letter-spacing:-0.358px;">{"id":1043605713,"name</span>
</div>
<svg style="position:absolute;left:292px;top:845.9100000000001px;" width="11" height="15" viewBox="0 0 11 15" fill="none"><path d="M2.4 2.2 L8 7.2 L2.4 12.2" stroke="#242424" stroke-width="1.3" stroke-linecap="round" stroke-linejoin="round"/></svg>
<span style="position:absolute;left:321.88px;top:846.00px;font-size:15.4px;line-height:15.4px;color:#242424;white-space:pre;letter-spacing:-0.592px;">53,755,092,106</span>
<span style="position:absolute;left:441.08px;top:846.00px;font-size:15.4px;line-height:15.4px;color:#242424;white-space:pre;letter-spacing:-0.079px;">jasperhabicht/leporello</span>
<span style="position:absolute;left:667.04px;top:846.00px;font-size:15.4px;line-height:15.4px;color:#242424;white-space:pre;letter-spacing:-0.813px;">ReleaseEvent</span>
<span style="position:absolute;left:853.24px;top:846.00px;font-size:15.4px;line-height:15.4px;color:#242424;white-space:pre;letter-spacing:-0.218px;">{"id":6378801,"login":"jasperhabicht","display_login":"jasperha...</span>
<div style="position:absolute;left:1288px;top:842.9px;width:157px;height:24px;overflow:hidden">
<span style="position:absolute;left:2.04px;top:3.00px;font-size:15.4px;line-height:15.4px;color:#242424;white-space:pre;letter-spacing:-0.358px;">{"id":1024924645,"name</span>
</div>
<svg style="position:absolute;left:292px;top:877.1800000000001px;" width="11" height="15" viewBox="0 0 11 15" fill="none"><path d="M2.4 2.2 L8 7.2 L2.4 12.2" stroke="#242424" stroke-width="1.3" stroke-linecap="round" stroke-linejoin="round"/></svg>
<span style="position:absolute;left:321.88px;top:877.00px;font-size:15.4px;line-height:15.4px;color:#242424;white-space:pre;letter-spacing:-0.584px;">53,755,092,107</span>
<span style="position:absolute;left:439.44px;top:877.00px;font-size:15.4px;line-height:15.4px;color:#242424;white-space:pre;letter-spacing:-0.078px;">Rz-C/Mohist</span>
<span style="position:absolute;left:666.88px;top:877.00px;font-size:15.4px;line-height:15.4px;color:#242424;white-space:pre;letter-spacing:-0.720px;">IssuesEvent</span>
<span style="position:absolute;left:853.24px;top:877.00px;font-size:15.4px;line-height:15.4px;color:#242424;white-space:pre;letter-spacing:-0.171px;">{"id":23317456,"login":"Mgazul","display_login":"Mgazul","gra...</span>
<div style="position:absolute;left:1288px;top:874.2px;width:157px;height:24px;overflow:hidden">
<span style="position:absolute;left:2.04px;top:3.00px;font-size:15.4px;line-height:15.4px;color:#242424;white-space:pre;letter-spacing:-0.245px;">{"id":204267956,"name"</span>
</div>
<svg style="position:absolute;left:292px;top:908.45px;" width="11" height="15" viewBox="0 0 11 15" fill="none"><path d="M2.4 2.2 L8 7.2 L2.4 12.2" stroke="#242424" stroke-width="1.3" stroke-linecap="round" stroke-linejoin="round"/></svg>
<span style="position:absolute;left:321.88px;top:908.00px;font-size:15.4px;line-height:15.4px;color:#242424;white-space:pre;letter-spacing:-0.504px;">53,755,092,113</span>
<span style="position:absolute;left:440.66px;top:908.00px;font-size:15.4px;line-height:15.4px;color:#242424;white-space:pre;letter-spacing:-0.067px;">yaacov/kubectl-mtv</span>
<span style="position:absolute;left:667.04px;top:908.00px;font-size:15.4px;line-height:15.4px;color:#242424;white-space:pre;letter-spacing:-0.597px;">PullRequestReviewEvent</span>
<span style="position:absolute;left:853.24px;top:908.00px;font-size:15.4px;line-height:15.4px;color:#242424;white-space:pre;letter-spacing:-0.113px;">{"id":136622811,"login":"coderabbitai[bot]","display_login":"c...</span>
<div style="position:absolute;left:1288px;top:905.5px;width:157px;height:24px;overflow:hidden">
<span style="position:absolute;left:2.04px;top:3.00px;font-size:15.4px;line-height:15.4px;color:#242424;white-space:pre;letter-spacing:-0.245px;">{"id":961738059,"name"</span>
</div>
<svg style="position:absolute;left:292px;top:939.72px;" width="11" height="15" viewBox="0 0 11 15" fill="none"><path d="M2.4 2.2 L8 7.2 L2.4 12.2" stroke="#242424" stroke-width="1.3" stroke-linecap="round" stroke-linejoin="round"/></svg>
<span style="position:absolute;left:321.88px;top:940.00px;font-size:15.4px;line-height:15.4px;color:#242424;white-space:pre;letter-spacing:-0.506px;">53,755,092,115</span>
<span style="position:absolute;left:441.08px;top:940.00px;font-size:15.4px;line-height:15.4px;color:#242424;white-space:pre;letter-spacing:-0.082px;">jbob383/supreme-waddle</span>
<span style="position:absolute;left:667.04px;top:940.00px;font-size:15.4px;line-height:15.4px;color:#242424;white-space:pre;letter-spacing:-0.620px;">PushEvent</span>
<span style="position:absolute;left:853.24px;top:940.00px;font-size:15.4px;line-height:15.4px;color:#242424;white-space:pre;letter-spacing:-0.088px;">{"id":41898282,"login":"github-actions[bot]","display_login":"g...</span>
<div style="position:absolute;left:1288px;top:936.7px;width:157px;height:24px;overflow:hidden">
<span style="position:absolute;left:2.04px;top:3.00px;font-size:15.4px;line-height:15.4px;color:#242424;white-space:pre;letter-spacing:-0.358px;">{"id":1043137209,"name</span>
</div>
<svg style="position:absolute;left:292px;top:970.99px;" width="11" height="15" viewBox="0 0 11 15" fill="none"><path d="M2.4 2.2 L8 7.2 L2.4 12.2" stroke="#242424" stroke-width="1.3" stroke-linecap="round" stroke-linejoin="round"/></svg>
<span style="position:absolute;left:321.88px;top:971.00px;font-size:15.4px;line-height:15.4px;color:#242424;white-space:pre;letter-spacing:-0.504px;">53,755,092,118</span>
<span style="position:absolute;left:440.27px;top:971.00px;font-size:15.4px;line-height:15.4px;color:#242424;white-space:pre;letter-spacing:-0.021px;">sealbell/sora-prompt</span>
<span style="position:absolute;left:667.04px;top:971.00px;font-size:15.4px;line-height:15.4px;color:#242424;white-space:pre;letter-spacing:-0.620px;">PushEvent</span>
<span style="position:absolute;left:853.24px;top:971.00px;font-size:15.4px;line-height:15.4px;color:#242424;white-space:pre;letter-spacing:-0.088px;">{"id":41898282,"login":"github-actions[bot]","display_login":"g...</span>
<div style="position:absolute;left:1288px;top:968.0px;width:157px;height:24px;overflow:hidden">
<span style="position:absolute;left:2.04px;top:3.00px;font-size:15.4px;line-height:15.4px;color:#242424;white-space:pre;letter-spacing:-0.245px;">{"id":762645410,"name"</span>
</div>
<div style="position:absolute;left:280px;top:996.1px;width:1165px;height:12.2px;overflow:hidden">
<svg style="position:absolute;left:12px;top:6.2000000000000455px;" width="11" height="15" viewBox="0 0 11 15" fill="none"><path d="M2.4 2.2 L8 7.2 L2.4 12.2" stroke="#242424" stroke-width="1.3" stroke-linecap="round" stroke-linejoin="round"/></svg>
<span style="position:absolute;left:41.88px;top:6.00px;font-size:15.4px;line-height:15.4px;color:#242424;white-space:pre;letter-spacing:-0.584px;">53,755,092,122</span>
<span style="position:absolute;left:161.08px;top:6.00px;font-size:15.4px;line-height:15.4px;color:#242424;white-space:pre;letter-spacing:-0.266px;">junseidesu/Libsararian</span>
<span style="position:absolute;left:387.04px;top:6.00px;font-size:15.4px;line-height:15.4px;color:#242424;white-space:pre;letter-spacing:-0.620px;">PushEvent</span>
<span style="position:absolute;left:573.24px;top:6.00px;font-size:15.4px;line-height:15.4px;color:#242424;white-space:pre;letter-spacing:-0.374px;">{"id":90096640,"login":"junseidesu","display_login":"junseides...</span>
<div style="position:absolute;left:1008px;top:3.2px;width:157px;height:24px;overflow:hidden">
<span style="position:absolute;left:2.04px;top:3.00px;font-size:15.4px;line-height:15.4px;color:#242424;white-space:pre;letter-spacing:-0.358px;">{"id":1029144796,"name</span>
</div>
</div>
<div style="position:absolute;left:1526px;top:642px;width:796.50px;height:404.50px;background:#fff;border-radius:9px;box-shadow:0 2px 4px rgba(0,0,0,.11),0 0 2px rgba(0,0,0,.10);"></div>
<span style="position:absolute;left:1540.04px;top:654.00px;font-size:17.8px;line-height:17.8px;color:#242424;white-space:pre;-webkit-text-stroke:0.35px #242424;letter-spacing:-0.407px;">Live Push Events Per Day</span>
<span style="position:absolute;left:1541.48px;top:676.00px;font-size:12px;line-height:12px;color:#616161;white-space:pre;letter-spacing:0.205px;">As of 16 minutes ago</span>
<div style="position:absolute;left:2294.2px;top:671.25px;width:2.90px;height:2.90px;background:#424242;border-radius:2px;"></div>
<div style="position:absolute;left:2300.7px;top:671.25px;width:2.90px;height:2.90px;background:#424242;border-radius:2px;"></div>
<div style="position:absolute;left:2307.2px;top:671.25px;width:2.90px;height:2.90px;background:#424242;border-radius:2px;"></div>
<svg style="position:absolute;left:2308px;top:1032.6px;" width="9" height="9" viewBox="0 0 9 9" fill="none"><path d="M8 0.6 V8 H0.6" stroke="#616161" stroke-width="1.8"/></svg>
<div style="position:absolute;left:1595px;top:714.4px;width:700.50px;height:1.20px;background:#e6e6e6;border-radius:0px;"></div>
<span style="position:absolute;left:1553.67px;top:709.00px;font-size:13.5px;line-height:13.5px;color:#605e5c;white-space:pre;letter-spacing:0.316px;">100</span>
<div style="position:absolute;left:1595px;top:771.1px;width:700.50px;height:1.20px;background:#e6e6e6;border-radius:0px;"></div>
<span style="position:absolute;left:1561.21px;top:765.00px;font-size:13.5px;line-height:13.5px;color:#605e5c;white-space:pre;letter-spacing:0.643px;">75</span>
<div style="position:absolute;left:1595px;top:828.0px;width:700.50px;height:1.20px;background:#e6e6e6;border-radius:0px;"></div>
<span style="position:absolute;left:1561.36px;top:822.00px;font-size:13.5px;line-height:13.5px;color:#605e5c;white-space:pre;letter-spacing:0.452px;">50</span>
<div style="position:absolute;left:1595px;top:884.6999999999999px;width:700.50px;height:1.20px;background:#e6e6e6;border-radius:0px;"></div>
<span style="position:absolute;left:1561.22px;top:879.00px;font-size:13.5px;line-height:13.5px;color:#605e5c;white-space:pre;letter-spacing:0.630px;">25</span>
<div style="position:absolute;left:1595px;top:941.6px;width:700.50px;height:1.20px;background:#ccd6eb;border-radius:0px;"></div>
<span style="position:absolute;left:1568.67px;top:936.00px;font-size:13.5px;line-height:13.5px;color:#605e5c;white-space:pre;">0</span>
<div style="position:absolute;left:1540px;top:955px;width:768px;height:30px;overflow:hidden">
<span style="position:absolute;left:41.14px;top:9.00px;font-size:13.5px;line-height:13.5px;color:#605e5c;white-space:pre;letter-spacing:-0.201px;">Jan '24</span>
<span style="position:absolute;left:150.74px;top:9.00px;font-size:13.5px;line-height:13.5px;color:#605e5c;white-space:pre;letter-spacing:0.402px;">Mar '24</span>
<span style="position:absolute;left:264.84px;top:9.00px;font-size:13.5px;line-height:13.5px;color:#605e5c;white-space:pre;letter-spacing:0.326px;">May '24</span>
<span style="position:absolute;left:385.44px;top:9.00px;font-size:13.5px;line-height:13.5px;color:#605e5c;white-space:pre;letter-spacing:-0.016px;">Jul '24</span>
<span style="position:absolute;left:498.39px;top:9.00px;font-size:13.5px;line-height:13.5px;color:#605e5c;white-space:pre;letter-spacing:-0.059px;">Sep '24</span>
<span style="position:absolute;left:611.89px;top:9.00px;font-size:13.5px;line-height:13.5px;color:#605e5c;white-space:pre;letter-spacing:0.359px;">Nov '24</span>
<span style="position:absolute;left:729.84px;top:9.00px;font-size:13.5px;line-height:13.5px;color:#605e5c;white-space:pre;letter-spacing:-0.172px;">Jan '25</span>
</div>
<svg style="position:absolute;left:1590px;top:700px;" width="725" height="270" viewBox="0 0 725 270" fill="none"><path d="M12.0 242.2 V254.4" stroke="#ccd6eb" stroke-width="1.2"/><path d="M124.6 242.2 V254.4" stroke="#ccd6eb" stroke-width="1.2"/><path d="M239.6 242.2 V254.4" stroke="#ccd6eb" stroke-width="1.2"/><path d="M354.6 242.2 V254.4" stroke="#ccd6eb" stroke-width="1.2"/><path d="M471.0 242.2 V254.4" stroke="#ccd6eb" stroke-width="1.2"/><path d="M586.0 242.2 V254.4" stroke="#ccd6eb" stroke-width="1.2"/><path d="M700.7 242.2 V254.4" stroke="#ccd6eb" stroke-width="1.2"/><path d="M11.7 87.3 L13.8 98.9 L15.8 94.1 L17.8 96.9 L21.1 93.6 L23.3 76.8 L25.1 106.9 L27.1 95.9 L30.8 104.9 L33.9 89.1 L36.6 74.5 L38.8 91.4 L40.3 90.9 L43.9 98.1 L45.9 96.9 L47.8 82.4 L49.7 77.1 L51.6 101.2 L53.9 95.9 L55.4 95.9 L57.2 101.9 L59.0 101.9 L60.9 84.6 L62.9 79.3 L64.7 96.6 L66.5 87.6 L68.9 95.1 L70.7 95.1 L72.7 84.6 L73.7 67.8 L76.0 68.4 L77.9 95.1 L81.3 89.4 L84.3 85.4 L85.8 84.6 L87.3 65.8 L89.2 65.0 L91.2 88.8 L93.0 83.9 L94.8 89.1 L96.7 98.9 L100.1 84.6 L102.3 73.8 L104.1 99.7 L107.1 94.4 L109.8 89.9 L111.6 81.6 L113.6 62.3 L115.6 68.1 L117.4 91.4 L119.3 105.7 L121.1 103.4 L123.1 106.0 L124.9 104.2 L126.7 90.3 L128.6 89.4 L130.6 110.2 L132.4 105.7 L134.4 104.5 L136.2 93.6 L138.1 89.9 L139.9 74.1 L141.9 74.8 L143.7 101.2 L145.7 115.5 L147.5 99.7 L149.3 93.6 L151.2 117.0 L153.2 107.9 L155.0 104.2 L156.9 124.5 L159.5 120.7 L164.5 117.7 L166.3 102.7 L168.2 102.4 L170.0 120.0 L172.7 111.7 L175.7 106.4 L178.3 96.6 L179.8 90.6 L181.6 86.9 L183.1 105.4 L185.1 98.9 L188.8 98.9 L190.8 95.1 L192.6 80.8 L194.6 81.9 L196.4 99.7 L198.3 100.9 L200.1 100.9 L203.9 110.2 L205.8 94.4 L207.6 104.2 L209.6 118.5 L213.4 104.5 L217.1 104.9 L218.9 91.4 L220.9 88.8 L222.7 105.7 L224.6 108.4 L226.5 108.4 L230.2 101.9 L232.2 85.4 L234.0 84.3 L235.9 99.7 L237.7 95.1 L241.5 92.9 L243.5 90.6 L245.3 76.8 L247.2 83.9 L249.0 100.4 L252.8 107.2 L254.7 99.4 L256.5 98.9 L258.5 86.9 L260.3 86.1 L262.3 106.4 L264.1 102.7 L266.0 104.5 L269.8 98.5 L271.6 84.6 L273.5 82.8 L275.4 106.4 L279.1 106.4 L280.6 109.4 L282.9 129.4 L284.8 89.9 L286.6 93.6 L290.4 118.5 L292.4 107.5 L294.2 107.9 L296.1 112.4 L297.9 101.9 L299.9 93.6 L301.7 115.5 L303.6 112.4 L305.4 114.7 L308.5 107.9 L311.2 91.4 L313.0 90.6 L314.9 115.0 L316.7 108.4 L318.7 104.5 L322.0 102.7 L324.3 87.6 L326.2 90.3 L328.0 114.4 L331.8 104.2 L333.7 103.4 L335.5 101.2 L337.5 90.6 L339.3 89.9 L341.3 110.2 L343.1 106.0 L345.0 107.9 L346.8 104.9 L348.8 106.0 L350.6 92.1 L352.5 90.6 L354.3 115.0 L356.3 111.7 L359.6 241.4 L473.2 241.4 L474.1 111.7 L476.4 107.9 L480.2 103.4 L482.1 87.9 L483.9 89.4 L485.9 112.0 L487.7 106.9 L491.4 109.0 L493.2 105.7 L495.2 91.8 L497.2 88.8 L499.0 113.5 L500.9 107.9 L502.7 109.4 L504.7 103.9 L506.5 101.9 L508.4 83.9 L510.2 80.8 L512.2 107.9 L514.8 103.4 L519.7 99.4 L521.5 79.3 L523.5 81.3 L525.3 103.0 L527.2 101.9 L529.1 95.9 L531.0 94.8 L532.8 93.6 L534.8 78.6 L536.6 77.5 L538.5 101.5 L541.1 96.6 L543.3 94.8 L546.1 96.3 L547.9 83.9 L549.8 81.9 L551.6 103.0 L553.6 100.4 L555.4 99.7 L557.3 106.9 L558.0 110.0 L559.0 241.4 L648.2 241.4 L649.4 101.5 L651.2 101.2 L653.2 85.8 L655.0 87.9 L657.0 110.5 L658.8 104.2 L660.7 105.4 L664.5 101.9 L666.4 82.4 L668.2 84.3 L670.0 106.0 L672.0 99.7 L673.8 100.4 L677.6 97.4 L679.5 79.8 L681.3 78.9 L683.3 97.8 L685.1 92.9 L687.0 77.8 L688.9 81.6 L690.8 80.8 L694.6 74.1 L696.5 90.6 L698.8 84.9" stroke="#4a86c8" stroke-width="2.2" stroke-linejoin="round" stroke-linecap="round" fill="none"/></svg>
<div style="position:absolute;left:1852.5px;top:1009.7px;width:7.60px;height:7.60px;background:#4a86c8;border-radius:4px;"></div>
<span style="position:absolute;left:1868.57px;top:1008.00px;font-size:14.5px;line-height:14.5px;color:#2e2e2e;white-space:pre;letter-spacing:-0.036px;">percentPushEvents</span>
<div style="position:absolute;left:250px;top:1050px;width:2090px;height:153px;overflow:hidden">
<div style="position:absolute;left:14px;top:12px;width:2057.6px;height:400px;background:#fff;border-radius:9px;box-shadow:0 2px 4px rgba(0,0,0,.11),0 0 2px rgba(0,0,0,.10)"></div>
</div>
<span style="position:absolute;left:277.54px;top:1075.00px;font-size:17.8px;line-height:17.8px;color:#242424;white-space:pre;-webkit-text-stroke:0.35px #242424;letter-spacing:0.055px;">Events over time</span>
<span style="position:absolute;left:278.98px;top:1097.00px;font-size:12px;line-height:12px;color:#616161;white-space:pre;letter-spacing:0.200px;">As of 16 minutes ago</span>
<div style="position:absolute;left:2295.0px;top:1091.05px;width:2.90px;height:2.90px;background:#424242;border-radius:2px;"></div>
<div style="position:absolute;left:2301.55px;top:1091.05px;width:2.90px;height:2.90px;background:#424242;border-radius:2px;"></div>
<div style="position:absolute;left:2308.1px;top:1091.05px;width:2.90px;height:2.90px;background:#424242;border-radius:2px;"></div>
<span style="position:absolute;left:291.11px;top:1129.00px;font-size:13.5px;line-height:13.5px;color:#605e5c;white-space:pre;letter-spacing:0.362px;">7.5M</span>
<div style="position:absolute;left:340.2px;top:1134.3px;width:1955.80px;height:1.30px;background:#e6e6e6;border-radius:0px;"></div>
<svg style="position:absolute;left:700px;top:1150px;" width="1500" height="53" viewBox="0 0 1500 53" fill="none"><path d="M13.2 54.0 L16.4 15.4 L19.5 54.0 M251.2 54.0 L252.6 42.7 L254.3 54.0 M272.0 54.0 L273.5 39.8 L279.2 36.2 L281.4 54.0 M1443.4 54.0 L1445.0 29.0 L1446.6 54.0" stroke="#1e6468" stroke-width="2.4" stroke-linejoin="round" fill="none"/></svg>
</body></html>
